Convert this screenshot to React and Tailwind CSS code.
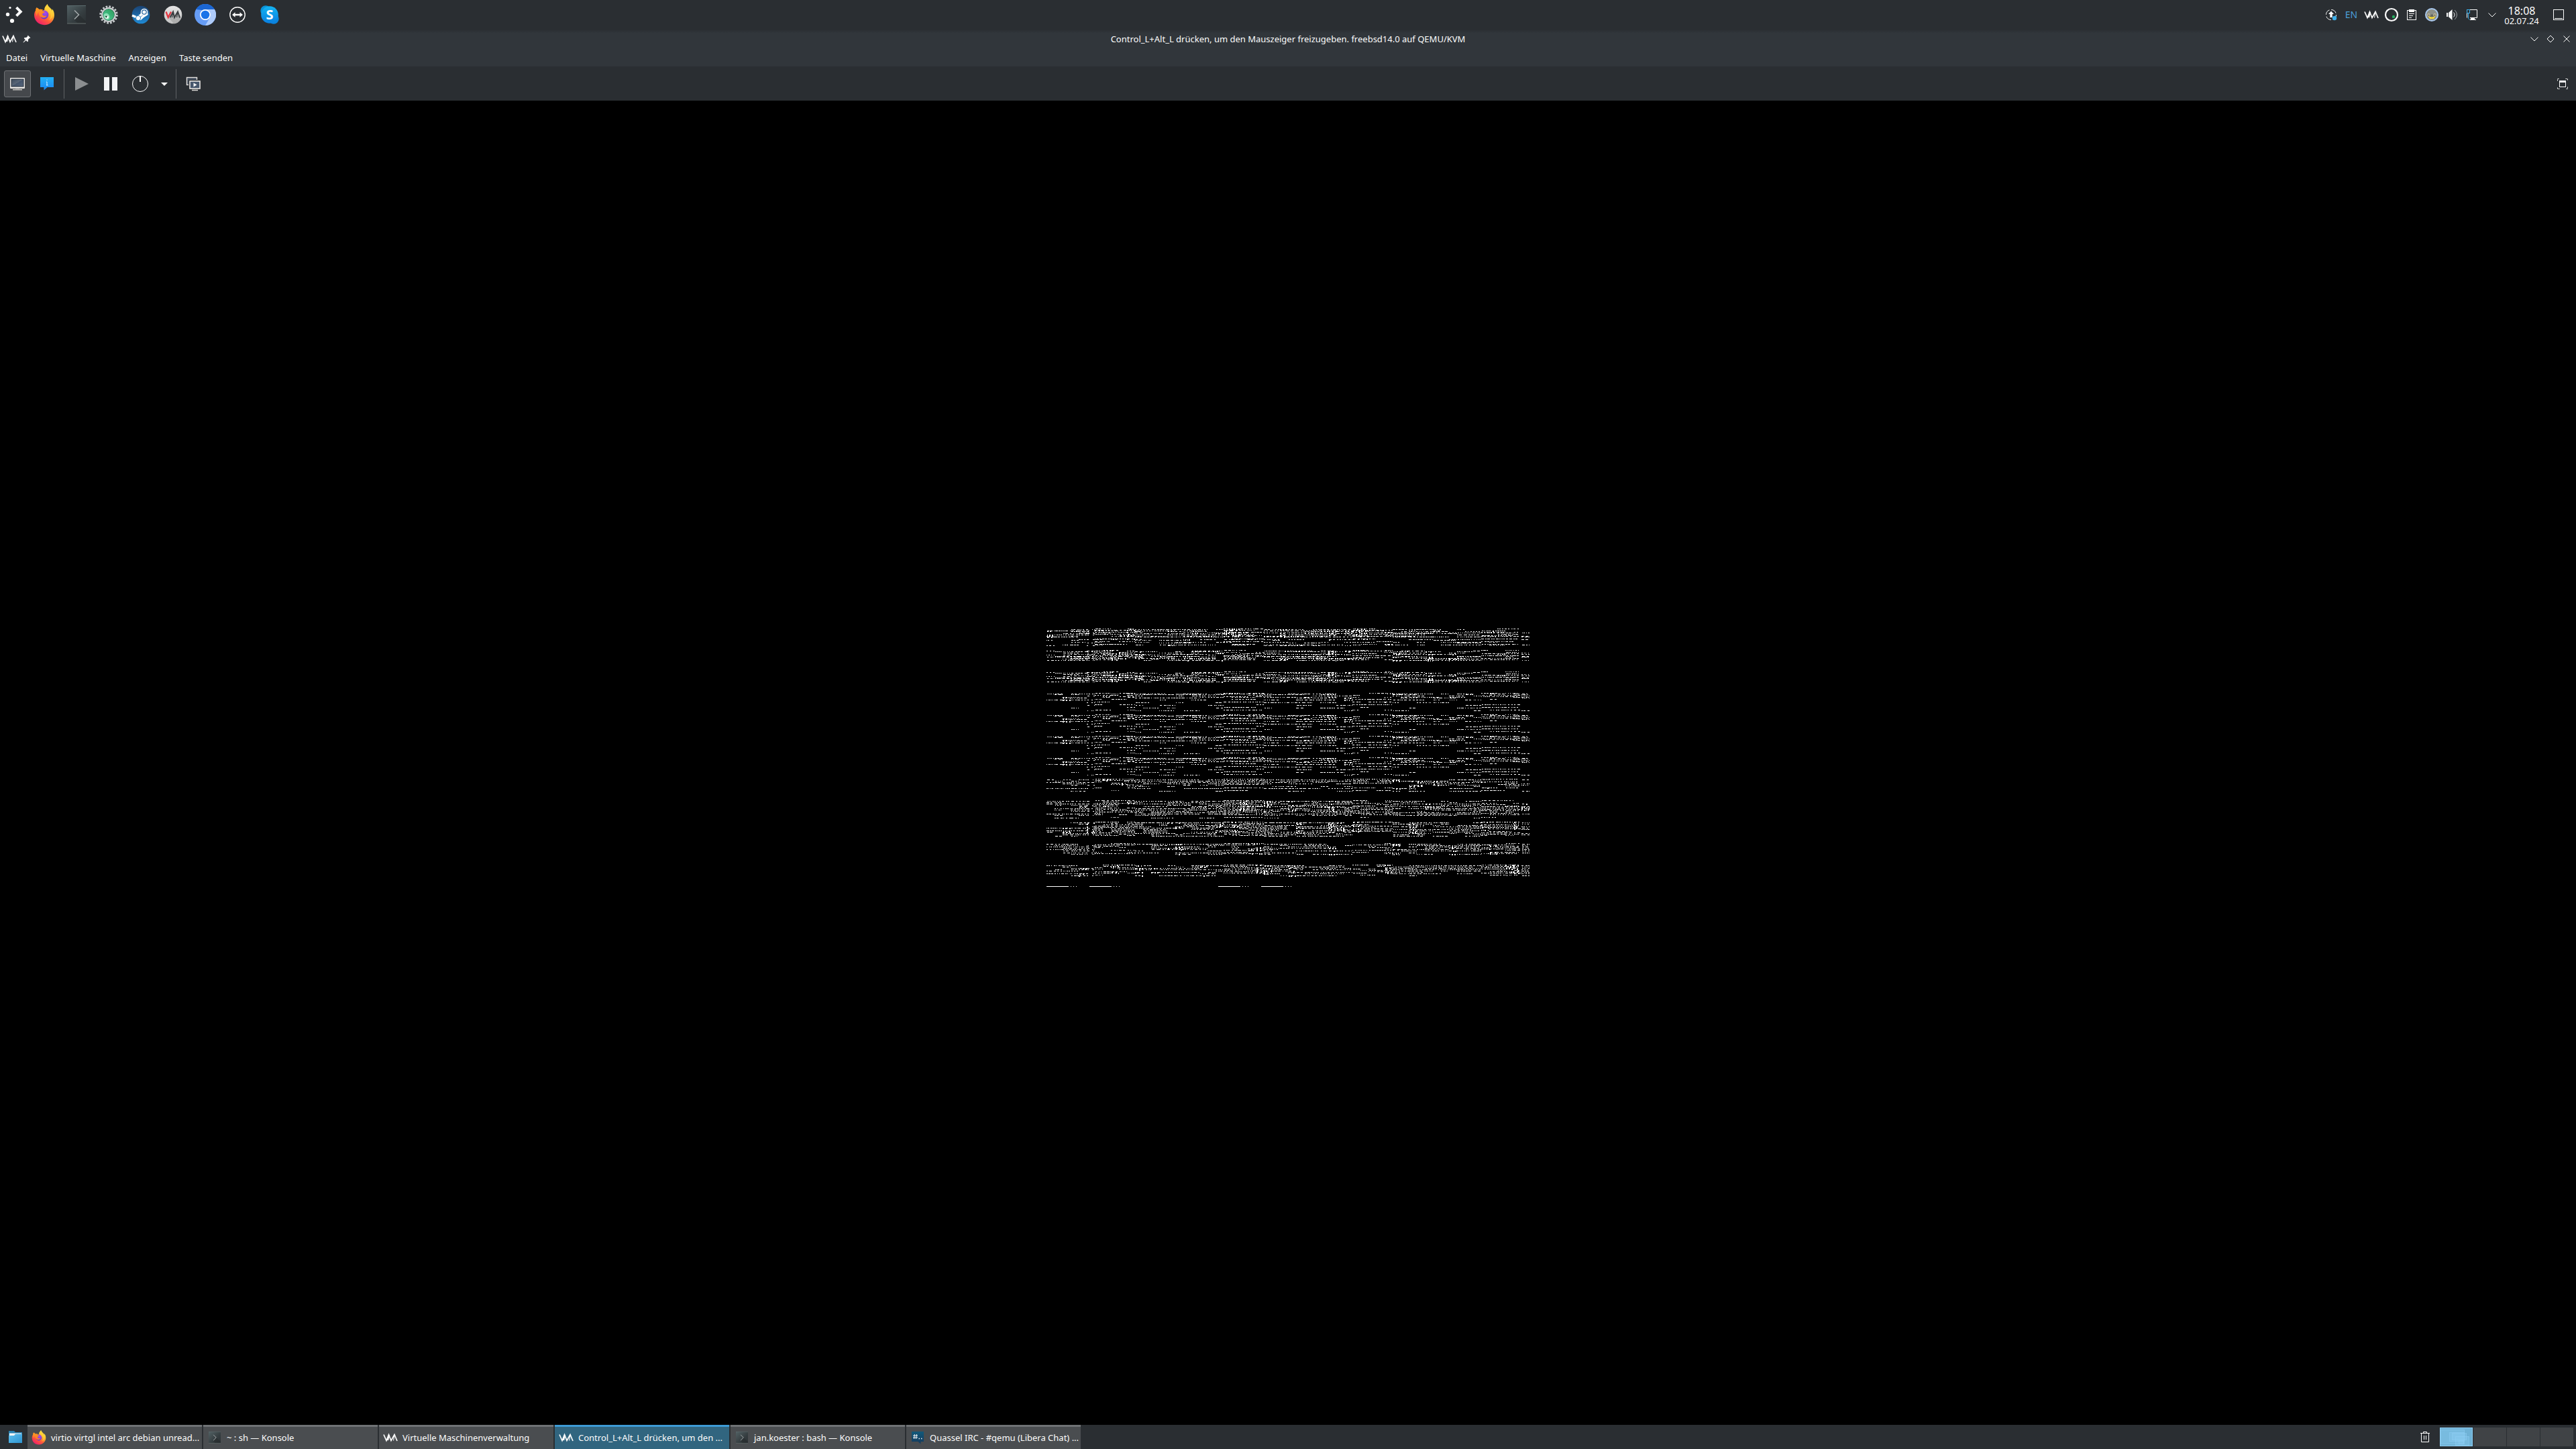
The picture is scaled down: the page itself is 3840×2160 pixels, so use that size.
import React from "react";

/* ---------- guest display: garbled text-mode framebuffer ---------- */

const SPARSE = [[0, 0.6], [1, 0.5], [3, 0.62], [5, 0.5], [6, 0.35], [9, 0.5], [13, 0.5], [17, 0.45], [21, 0.45], [25, 0.5]];
const MEDIUM = [[0, 0.55], [1, 0.4], [3, 0.5], [5, 0.75], [6, 0.4], [8, 0.75], [9, 0.6], [11, 0.6], [12, 0.4], [14, 0.75]];
const BANDS = [
  { y: 0, seed: 11, rows: [[0, 0.65], [2, 0.7], [3, 0.5], [5, 0.75], [6, 0.5], [8, 0.75], [10, 0.65], [11, 0.7], [15, 0.65], [16, 0.35], [19, 0.5], [20, 0.25], [23, 0.55], [24, 0.25]] },
  { y: 32, seed: 23, rows: MEDIUM },
  { y: 64, seed: 23, rows: MEDIUM },
  { y: 96, seed: 37, rows: SPARSE },
  { y: 128, seed: 37, rows: SPARSE },
  { y: 160, seed: 37, rows: SPARSE },
  { y: 192, seed: 37, rows: SPARSE },
  { y: 224, seed: 53, rows: [[0, 0.7], [2, 0.6], [4, 0.7], [6, 0.6], [8, 0.65], [10, 0.4], [13, 0.6], [17, 0.5]] },
  { y: 256, seed: 67, rows: [[0, 0.8], [2, 0.5], [4, 0.6], [6, 0.75], [8, 0.8], [9, 0.5], [11, 0.8], [13, 0.7], [15, 0.5], [17, 0.7], [19, 0.7], [21, 0.5], [25, 0.55]] },
  { y: 288, seed: 71, rows: [[0, 0.8], [2, 0.5], [4, 0.7], [6, 0.7], [8, 0.8], [10, 0.75], [12, 0.65], [14, 0.7], [16, 0.75], [18, 0.5], [20, 0.5]] },
  { y: 320, seed: 83, rows: [[0, 0.7], [2, 0.6], [4, 0.7], [6, 0.7], [8, 0.55], [10, 0.75], [13, 0.6], [15, 0.7]] },
  { y: 352, seed: 97, rows: [[0, 0.75], [2, 0.6], [4, 0.7], [6, 0.75], [8, 0.6], [10, 0.6], [12, 0.6], [15, 0.6]] },
];

function randomSource(seed) {
  let s = seed * 7919 + 17;
  return () => {
    s = (s * 1664525 + 1013904223) % 4294967296;
    return s / 4294967296;
  };
}

const CELL = 12;
const CELL_COUNT = 60;

/* Column weights shared by every band, so that dense and thin columns line up. */
const columnNext = randomSource(5);
const COLUMN_WEIGHT = Array.from({ length: CELL_COUNT }, (_, i) => {
  const base = 0.65 + columnNext() * 0.65;
  return i >= 22 && i <= 25 ? base + 0.35 : base;
});

function noisePath() {
  let d = "";
  for (const band of BANDS) {
    const next = randomSource(band.seed);
    const clump = Array.from({ length: CELL_COUNT }, () => next() < 0.13);
    for (const [dy, density] of band.rows) {
      let on = false;
      for (let c = 0; c < CELL_COUNT; c++) {
        const start = c * CELL;
        const end = start + CELL;
        const shift = Math.floor(start / 64) % 3 === 1 ? 0 : 1;
        if (next() < 0.6) on = next() < density * COLUMN_WEIGHT[c];
        const wide = next() < 0.5;
        let x = start + Math.floor(next() * 2);
        while (x < end) {
          const len = Math.min(wide ? 2 + Math.floor(next() * 3) : 1 + Math.floor(next() * 2), end - x);
          const gutter = (x > 63 && x < 67) || (x > 703 && x < 708);
          if (on && !gutter) {
            d += `M${x} ${band.y + dy + shift}h${len}v1h-${len}z`;
            if (clump[c] && dy < 16 && next() < 0.6) d += `M${x} ${band.y + dy + shift + 1}h${Math.min(len, 2)}v1h-${Math.min(len, 2)}z`;
          }
          x += len + 1 + Math.floor(next() * 2.6);
        }
      }
    }
  }
  for (const x of [0, 64, 256, 320]) {
    d += `M${x} 384h33v1h-33zM${x + 36} 384h1v1h-1zM${x + 40} 384h1v1h-1zM${x + 44} 384h1v1h-1z`;
  }
  return d;
}

const NOISE = noisePath();

/* ---------- icons ---------- */

const Svg = ({ s = 32, children, ...rest }) => (
  <svg width={s} height={s} viewBox={`0 0 ${s} ${s}`} fill="none" aria-hidden="true" {...rest}>
    {children}
  </svg>
);

const LauncherIcon = () => (
  <Svg>
    <circle cx="10" cy="5.5" r="1.6" fill="#fcfcfc" />
    <circle cx="6.5" cy="15.5" r="2.7" fill="#fcfcfc" />
    <circle cx="13" cy="25" r="3.1" fill="#fcfcfc" />
    <path d="M19.5 5.2l6.2 6.2-6.2 6.2" stroke="#fcfcfc" strokeWidth="4" />
  </Svg>
);

const FirefoxIcon = ({ id, size = 32 }) => (
  <svg width={size} height={size} viewBox="0 0 32 32" aria-hidden="true">
    <defs>
      <linearGradient id={`${id}a`} x1="0.8" y1="0.1" x2="0.25" y2="0.95">
        <stop offset="0" stopColor="#fff04a" />
        <stop offset="0.35" stopColor="#ffb42c" />
        <stop offset="0.65" stopColor="#ff5a3a" />
        <stop offset="1" stopColor="#f0206a" />
      </linearGradient>
      <radialGradient id={`${id}b`} cx="0.6" cy="0.3" r="0.8">
        <stop offset="0" stopColor="#a94bf0" />
        <stop offset="1" stopColor="#5438c8" />
      </radialGradient>
      <linearGradient id={`${id}c`} x1="0.3" y1="0" x2="0.5" y2="1">
        <stop offset="0" stopColor="#ff9a1f" />
        <stop offset="1" stopColor="#ff7a2a" />
      </linearGradient>
    </defs>
    <path fill={`url(#${id}a)`} d="M20.6 0c-1 1.800-4.400 4-4.300 8.500L9 12.500 4.600 5.200C3.400 6.500 3.200 8 3.300 9.500 1.700 11.500 1 14 1 16.600 1 25 7.800 31.200 16 31.200S31 25 31 16.400c0-4-1.500-7.300-3.200-9.200.3 1.200.3 2.300.2 3C26.600 6.300 21.600 4.500 20.600 0z" />
    <circle cx="16" cy="16" r="6.400" fill={`url(#${id}b)`} />
    <path fill={`url(#${id}c)`} d="M4.600 5.200c1.300.3 2.800 1.500 3.700 2.700 2-.5 4.200-.3 6 .8-1.200.8-1.300 1.700-.2 2.100 1 .3 2.600.1 2.600 1-.2 1.300-2.500 1.600-3.300 2.400-.8 1 .2 3.300 2.600 3.500 1.400.1 2.600-.6 3.800-.2-1.300 2.300-3.800 3.400-6.300 2.800C9 19.200 7 15 8.300 11.400 5.800 13 4.900 15.500 5 18 2.800 14.500 2.600 9 4.600 5.200z" />
    <path fill="#ffcf3a" d="M20.600 0c-1 1.800-3.600 3.800-4.300 7.200 4 .6 6.800 3.600 7 7.400.8-.8 1.100-1.800 1-2.800 2.400 3.600 1.800 9-1.600 12.200C28 22 30 16 28 10.200 26.600 6.300 21.600 4.500 20.600 0z" opacity="0.75" />
  </svg>
);

const KonsoleIcon = ({ id, size = 28 }) => (
  <svg width={size} height={size} viewBox="0 0 28 28" aria-hidden="true" fill="none">
    <defs>
      <linearGradient id={id} x1="0" y1="0" x2="1" y2="1">
        <stop offset="0" stopColor="#536265" />
        <stop offset="0.6" stopColor="#353d40" />
        <stop offset="1" stopColor="#2a3033" />
      </linearGradient>
    </defs>
    <rect width="28" height="27" fill={`url(#${id})`} />
    <path d="M18 14l10 10v3H16l-5-5z" fill="#23282a" opacity="0.5" />
    <path d="M0 .5h28" stroke="#5c6c6f" />
    <path d="M0 27h28" stroke="#67706f" />
    <path d="M11 7.500l6.500 6.500-6.500 6.500" stroke="#a4aaab" strokeWidth="1.500" />
  </svg>
);

const GearIcon = () => (
  <Svg>
    <defs>
      <linearGradient id="gearGreen" x1="1" y1="0" x2="0" y2="1">
        <stop offset="0" stopColor="#2c9a5a" />
        <stop offset="1" stopColor="#4ed09a" />
      </linearGradient>
    </defs>
    <circle cx="16" cy="16" r="12.300" stroke="#c9cdcf" strokeWidth="2.800" strokeDasharray="2.700 2.130" />
    <circle cx="16" cy="16" r="10.500" fill="#c9cdcf" stroke="#d8dbdd" />
    <circle cx="16" cy="16" r="8.700" fill="#1d5a40" />
    <circle cx="16" cy="16" r="8.200" fill="url(#gearGreen)" />
    <ellipse cx="13" cy="18.500" rx="4.200" ry="5" fill="#8fe0b8" transform="rotate(-30 13 18.500)" />
    <circle cx="13.500" cy="19.500" r="2.300" fill="#f4fff8" />
    <path d="M10.500 18l3.500-.5-1.200 3.200z" fill="#17402e" />
  </Svg>
);

const SteamIcon = () => (
  <Svg>
    <defs>
      <linearGradient id="steamBg" x1="0" y1="0" x2="0" y2="1">
        <stop offset="0" stopColor="#1b4373" />
        <stop offset="1" stopColor="#1f8bd6" />
      </linearGradient>
    </defs>
    <circle cx="16" cy="16" r="13.300" fill="url(#steamBg)" />
    <path d="M3 17l7.500 3.300 6-4.300 2.500-5.500 6 4.500-5.500 3.500-5 4.500" stroke="#fff" strokeWidth="3.400" strokeLinejoin="round" />
    <circle cx="21" cy="12" r="5.300" fill="#fff" />
    <circle cx="21" cy="12" r="3.200" fill="#fff" stroke="#1d5d98" strokeWidth="1.200" />
    <circle cx="12" cy="21" r="3.600" fill="#fff" stroke="#1d77b8" strokeWidth="0.900" />
  </Svg>
);

const VirtManagerIcon = () => (
  <Svg>
    <defs>
      <linearGradient id="vmBg" x1="0" y1="0" x2="0" y2="1">
        <stop offset="0" stopColor="#e4e4e4" />
        <stop offset="1" stopColor="#c4c4c4" />
      </linearGradient>
    </defs>
    <circle cx="16" cy="16" r="13.300" fill="url(#vmBg)" />
    <path d="M9 20l8 9c5-.5 9-3.500 11-8l-2-5z" fill="#8d8d8d" opacity="0.45" />
    <path d="M11.500 20l4.500-8.500 2 8.500 5-8.500 3 9" stroke="#3a3d40" strokeWidth="2" />
    <path d="M16 12l-1.500 8M23 12l-1.500 8" stroke="#3a3d40" strokeWidth="1.300" />
    <path d="M5.500 11.500l3.200 8.500 4.300-8.500" stroke="#e3343f" strokeWidth="2.200" />
  </Svg>
);

const ChromiumIcon = () => (
  <Svg>
    <circle cx="16" cy="16" r="16" fill="#669df6" />
    <path d="M2.140 8A16 16 0 0 1 29.860 8H16a8 8 0 0 0-6.900 4z" fill="#1b66d2" />
    <path d="M2.140 8L9.100 20 11 9z" fill="#669df6" />
    <path d="M29.860 8A16 16 0 0 1 16 32l6.930-12A8 8 0 0 0 16 8z" fill="#aecbfa" />
    <circle cx="16" cy="16" r="8" fill="#fff" />
    <circle cx="16" cy="16" r="6.300" fill="#1a73e8" />
  </Svg>
);

const TeamViewerIcon = () => (
  <Svg>
    <circle cx="16" cy="16" r="11.200" stroke="#fcfcfc" strokeWidth="1.400" />
    <path d="M8 16l4.500-3.800v2.600h7v-2.600L24 16l-4.500 3.800v-2.600h-7v2.600z" fill="#fcfcfc" />
  </Svg>
);

const SkypeIcon = () => (
  <Svg>
    <defs>
      <linearGradient id="skypeBg" x1="0" y1="0" x2="0" y2="1">
        <stop offset="0" stopColor="#14b4f2" />
        <stop offset="1" stopColor="#0a7fe0" />
      </linearGradient>
    </defs>
    <circle cx="10" cy="10" r="7.700" fill="#0a93d8" />
    <circle cx="22" cy="22" r="7.700" fill="#0b84dd" />
    <circle cx="16" cy="16" r="12.800" fill="url(#skypeBg)" />
    <text x="16" y="23" textAnchor="middle" fill="#fff" fontSize="20" fontWeight="700" fontFamily="'Noto Sans', sans-serif">S</text>
  </Svg>
);

const VmMark = () => (
  <Svg s={24}>
    <path d="M2 7.500l4 9L9.500 7.500 13 16.500l5-9 4 9.500" stroke="#fcfcfc" strokeWidth="1.700" />
    <path d="M9.500 8L7.500 16M18 8l-1.500 8.500M10.500 8l-2 8" stroke="#fcfcfc" strokeWidth="1.100" />
  </Svg>
);

const PinIcon = () => (
  <svg width="12" height="12" viewBox="0 0 12 12" aria-hidden="true">
    <path d="M7.500.5l4 4-1.700.4-1.900 2 .2 2.600-1.300.7-2-2L1 11.500.5 11l3.300-3.800-2-2L2.500 4l2.600.1 2-1.900z" fill="#fcfcfc" />
  </svg>
);

const UpdateIcon = () => (
  <Svg s={24}>
    <circle cx="12" cy="12" r="7.500" stroke="#fcfcfc" strokeDasharray="9 2.780" />
    <path d="M12 6.500l4 4.500h-2.300v5h-3.400v-5H8z" fill="#fcfcfc" />
    <circle cx="17" cy="17" r="3.200" fill="#3daee9" />
  </Svg>
);

const RingIcon = () => (
  <Svg s={24}>
    <circle cx="12" cy="12" r="9" stroke="#fcfcfc" strokeWidth="2.200" />
    <circle cx="15" cy="15" r="2.200" fill="#27ae60" />
  </Svg>
);

const ClipboardIcon = () => (
  <Svg s={24}>
    <rect x="5.500" y="5.500" width="13" height="14" stroke="#fcfcfc" />
    <rect x="8" y="4" width="8" height="4" fill="#fcfcfc" />
    <path d="M8 10.500h8M8 13.500h6M8 16.500h4" stroke="#fcfcfc" />
  </Svg>
);

const BirdIcon = () => (
  <Svg s={24}>
    <circle cx="12" cy="12" r="9" fill="#8d9088" stroke="#a9c8ee" strokeWidth="2" />
    <path d="M5 12.500c2-1.500 12-1.500 14 0l-2 3.500c-3 2-7 2-10 0z" fill="#666a64" />
    <path d="M6.500 14.500l5.500 1 5.500-1-2.500 3.500H9z" fill="#f3d93a" />
    <circle cx="7.500" cy="12.500" r="1.800" stroke="#e6d4a4" />
    <circle cx="16.500" cy="12.500" r="1.800" stroke="#e6d4a4" />
  </Svg>
);

const VolumeIcon = () => (
  <Svg s={24}>
    <path d="M4 9h2v6H4zM7 9l5.500-5v16L7 15z" fill="#fcfcfc" />
    <path d="M14.500 8.500c2 2 2 5 0 7" stroke="#fcfcfc" />
    <path d="M16 5c4.500 4 4.500 10 0 14" stroke="#a5a8aa" />
  </Svg>
);

const NetworkIcon = () => (
  <Svg s={24}>
    <path d="M9 4.500h10.500v12H9M4.500 10v6.500" stroke="#fcfcfc" />
    <path d="M10 16h6v3h2v1H9v-1h1z" fill="#fcfcfc" />
    <rect x="4.500" y="4.500" width="4" height="5" stroke="#3daee9" />
    <path d="M6.500 10v7.500l2 2" stroke="#3daee9" />
  </Svg>
);

const ChevronDown = () => (
  <Svg s={24}>
    <path d="M6.500 9.500l5.500 5.500 5.500-5.500" stroke="#fcfcfc" />
  </Svg>
);

const ShowDesktopIcon = () => (
  <Svg s={24}>
    <rect x="4.500" y="4.500" width="15" height="15" stroke="#fcfcfc" />
    <path d="M6 17.500h12" stroke="#fcfcfc" />
  </Svg>
);

const DiamondIcon = () => (
  <Svg s={24}>
    <path d="M12 7l5 5-5 5-5-5z" stroke="#fcfcfc" />
  </Svg>
);

const CloseIcon = () => (
  <Svg s={24}>
    <path d="M7.500 7.500l9 9M16.500 7.500l-9 9" stroke="#fcfcfc" />
  </Svg>
);

const ConsoleIcon = () => (
  <Svg s={24}>
    <defs>
      <linearGradient id="screen" x1="0" y1="0" x2="1" y2="1">
        <stop offset="0" stopColor="#3c4a5c" />
        <stop offset="0.5" stopColor="#5a6778" />
        <stop offset="0.5" stopColor="#44536a" />
        <stop offset="1" stopColor="#58687e" />
      </linearGradient>
    </defs>
    <rect x="1" y="3" width="22" height="16" rx="1" fill="#e9e7e4" />
    <rect x="3" y="5" width="18" height="11" fill="url(#screen)" stroke="#26303c" />
    <path d="M9 19h6v1H9z" fill="#6c6e70" />
    <path d="M5 20h14v1.500H5z" fill="#c9c7c4" />
  </Svg>
);

const InfoIcon = () => (
  <Svg s={24}>
    <defs>
      <linearGradient id="info" x1="0" y1="0" x2="0" y2="1">
        <stop offset="0" stopColor="#23b0f4" />
        <stop offset="1" stopColor="#1b86f0" />
      </linearGradient>
    </defs>
    <path d="M2 2h20v15h-9.500L7.500 21.500V17H2z" fill="url(#info)" />
    <path d="M12 5.500v1.200M11 9h1v5m-1 0h2.500" stroke="#d8efff" />
  </Svg>
);

const PlayIcon = () => (
  <Svg s={24}>
    <path d="M3 2l20 10L3 22z" fill="#8b8e90" />
  </Svg>
);

const PauseIcon = () => (
  <Svg s={24}>
    <path d="M2 2h8v20H2zM14 2h8v20h-8z" fill="#f2f3f5" />
  </Svg>
);

const PowerIcon = () => (
  <Svg s={26}>
    <circle cx="13" cy="13" r="11.500" stroke="#fcfcfc" />
    <path d="M13 1v9" stroke="#fcfcfc" strokeWidth="2" />
  </Svg>
);

const CaretIcon = () => (
  <Svg s={24}>
    <path d="M7 10h10l-5 5z" fill="#fcfcfc" />
  </Svg>
);

const ScreensIcon = () => (
  <Svg s={24}>
    <rect x="2.500" y="2.500" width="15" height="11" fill="#46515f" stroke="#e4e2df" strokeWidth="1.400" />
    <path d="M6 17h5" stroke="#c9c7c4" strokeWidth="2" />
    <rect x="6.500" y="7.500" width="16" height="12" fill="#46566c" stroke="#2a2e32" strokeWidth="3" />
    <rect x="7" y="8" width="15" height="11" fill="#46566c" stroke="#e9e7e4" strokeWidth="1.600" />
    <path d="M12.500 10.500l5 3-5 3z" fill="#f2f3f5" />
    <path d="M10 21.500h9" stroke="#dcdad7" strokeWidth="1.500" />
  </Svg>
);

const FullscreenIcon = () => (
  <Svg s={24}>
    <path d="M4.500 7.500v-3h3M16.500 4.500h3v3M19.500 16.500v3h-3M7.500 19.500h-3v-3" stroke="#fcfcfc" strokeDasharray="2 1 2 1" />
    <rect x="7.500" y="8" width="9" height="8.500" stroke="#fcfcfc" />
    <path d="M7 7h10v3H7z" fill="#fcfcfc" />
  </Svg>
);

const FolderIcon = () => (
  <Svg s={24}>
    <defs>
      <linearGradient id="folder" x1="0" y1="0" x2="1" y2="1">
        <stop offset="0" stopColor="#5cc0f0" />
        <stop offset="1" stopColor="#2f93cf" />
      </linearGradient>
    </defs>
    <path d="M2 3h8l2 2h10v9H2z" fill="#2980b0" />
    <path d="M3 6.500h18V12H3z" fill="#f4f6f7" />
    <path d="M2 10h8l2-2.500h10V21H2z" fill="url(#folder)" />
  </Svg>
);

const QuasselIcon = () => (
  <Svg s={20}>
    <defs>
      <linearGradient id="quassel" x1="0" y1="0" x2="0" y2="1">
        <stop offset="0" stopColor="#12597a" />
        <stop offset="1" stopColor="#153a5c" />
      </linearGradient>
    </defs>
    <path d="M1 1h18v15h-4.500v3.500L10.500 16H1z" fill="url(#quassel)" />
    <path d="M5.500 5L4.500 12M8.500 5l-1 7M3 7h7M3 10h7" stroke="#f2f3f5" />
    <path d="M11.500 11.500h1.500M15 11.500h1.500" stroke="#f2f3f5" strokeWidth="1.500" />
  </Svg>
);

const TrashIcon = () => (
  <Svg s={24}>
    <path d="M6.500 6.500v13h11v-13M5 6.500h14M9.500 6V4.500h5V6M10.500 10v6M13.500 10v6" stroke="#fcfcfc" />
  </Svg>
);

/* ---------- data ---------- */

const LAUNCHERS = [
  ["Firefox", <FirefoxIcon id="ff1" />],
  ["Konsole", <KonsoleIcon id="ko1" />],
  ["Einstellungen", <GearIcon />],
  ["Steam", <SteamIcon />],
  ["Virtuelle Maschinenverwaltung", <VirtManagerIcon />],
  ["Chromium", <ChromiumIcon />],
  ["TeamViewer", <TeamViewerIcon />],
  ["Skype", <SkypeIcon />],
];

const TRAY = [
  ["Aktualisierungen", <UpdateIcon />],
  ["Tastaturbelegung", <span className="text-[14px] leading-5 text-[#4a9fd8]">EN</span>],
  ["Virtuelle Maschinen", <VmMark />],
  ["Status", <RingIcon />],
  ["Zwischenablage", <ClipboardIcon />],
  ["Benachrichtigungen", <BirdIcon />],
  ["Lautstärke", <VolumeIcon />],
  ["Netzwerk", <NetworkIcon />],
  ["Weitere Symbole", <ChevronDown />],
];

const MENUS = ["Datei", "Virtuelle Maschine", "Anzeigen", "Taste senden"];

const TASKS = [
  { icon: <FirefoxIcon id="ff2" size={22} />, label: "virtio virtgl intel arc debian unread..." },
  { icon: <KonsoleIcon id="ko2" size={18} />, label: "~ : sh — Konsole" },
  { icon: <VmMark />, label: "Virtuelle Maschinenverwaltung" },
  { icon: <VmMark />, label: "Control_L+Alt_L drücken, um den ...", active: true },
  { icon: <KonsoleIcon id="ko3" size={18} />, label: "jan.koester : bash — Konsole" },
  { icon: <QuasselIcon />, label: "Quassel IRC - #qemu (Libera Chat) ..." },
];

/* ---------- parts ---------- */

const ToolButton = ({ label, children, className = "w-10" }) => (
  <button aria-label={label} className={`flex h-10 items-center justify-center rounded-[3px] ${className}`}>
    {children}
  </button>
);

const Separator = () => <div className="mx-px h-11 w-px bg-[#5f6265]" />;

function TopPanel() {
  return (
    <header className="flex h-11 items-center bg-[#2a2e32]">
      <button aria-label="Anwendungsmenü" className="flex h-11 w-[42px] items-center justify-center">
        <LauncherIcon />
      </button>
      {LAUNCHERS.map(([name, icon]) => (
        <button key={name} aria-label={name} className="flex h-11 w-12 items-center justify-center">
          {icon}
        </button>
      ))}
      <div className="ml-auto flex items-center">
        {TRAY.map(([name, icon]) => (
          <button key={name} aria-label={name} className="flex h-11 w-[30px] items-center justify-center">
            {icon}
          </button>
        ))}
        <button className="flex h-11 w-[58px] flex-col items-center justify-center pt-0.5">
          <span className="text-[16px] leading-4">18:08</span>
          <span className="text-[13px] leading-[14px]">02.07.24</span>
        </button>
        <button aria-label="Arbeitsfläche anzeigen" className="flex h-11 w-[52px] items-center justify-center">
          <ShowDesktopIcon />
        </button>
      </div>
    </header>
  );
}

function TitleBar() {
  return (
    <div className="grid h-7 grid-cols-[1fr_auto_1fr] items-center bg-linear-to-b from-[#2a2e32] from-0% to-[#31363b] to-20%">
      <div className="flex items-center gap-1.5 pl-0.5">
        <VmMark />
        <button aria-label="Anheften" className="p-0.5"><PinIcon /></button>
      </div>
      <h1 className="text-[13px] leading-5">Control_L+Alt_L drücken, um den Mauszeiger freizugeben. freebsd14.0 auf QEMU/KVM</h1>
      <div className="flex justify-end pr-0.5">
        <button aria-label="Minimieren"><ChevronDown /></button>
        <button aria-label="Wiederherstellen"><DiamondIcon /></button>
        <button aria-label="Schließen"><CloseIcon /></button>
      </div>
    </div>
  );
}

function MenuBar() {
  return (
    <nav className="flex h-[27px] items-center bg-[#31363b]">
      {MENUS.map((m) => (
        <button key={m} className="pl-[9px] pr-2.5 text-[13px] leading-5">{m}</button>
      ))}
    </nav>
  );
}

function ToolBar() {
  return (
    <div className="flex h-[51px] items-center gap-1 bg-[#2a2e32] px-1.5">
      <ToolButton label="Konsole" className="w-10 border border-[#6e7174] bg-[#45484c]"><ConsoleIcon /></ToolButton>
      <ToolButton label="Details"><InfoIcon /></ToolButton>
      <Separator />
      <ToolButton label="Starten"><PlayIcon /></ToolButton>
      <ToolButton label="Pause"><PauseIcon /></ToolButton>
      <ToolButton label="Herunterfahren"><PowerIcon /></ToolButton>
      <ToolButton label="Weitere Optionen" className="w-6"><CaretIcon /></ToolButton>
      <Separator />
      <ToolButton label="Schnappschüsse"><ScreensIcon /></ToolButton>
      <div className="ml-auto flex">
        <ToolButton label="Vollbild" className="w-7"><FullscreenIcon /></ToolButton>
      </div>
    </div>
  );
}

function TaskBar() {
  return (
    <footer className="flex h-9 items-stretch bg-[#2a2e32]">
      <button aria-label="Dateien" className="flex w-[41px] items-center justify-center pl-1"><FolderIcon /></button>
      <div className="flex gap-0.5">
        {TASKS.map((t) => (
          <button
            key={t.label}
            className={`flex w-[260px] items-center gap-1.5 border-t-[3px] pb-0.5 pl-[5px] text-left ${t.active ? "border-[#3d9bd6] bg-[#31657f]" : "border-[#6f7275] bg-[#4a4d50]"}`}
          >
            <span className="flex w-6 shrink-0 items-center justify-center">{t.icon}</span>
            <span className="whitespace-nowrap text-[13px] leading-5">{t.label}</span>
          </button>
        ))}
      </div>
      <div className="ml-auto flex items-center pr-1">
        <button aria-label="Papierkorb" className="mr-2.5"><TrashIcon /></button>
        <div className="flex gap-px">
          <button aria-label="Arbeitsfläche 1" className="h-7 w-[49px] border border-[#8fd0f5] bg-[#6fb2d6]">
            <svg className="h-full w-full" viewBox="0 0 47 26" aria-hidden="true">
              <g fill="#8accf0" fillOpacity="0.35" stroke="#8fd0f5" strokeOpacity="0.5">
                <rect x="0.500" y="2.500" width="35" height="21" />
                <rect x="13.500" y="6.500" width="22" height="13" />
                <rect x="17.500" y="7.500" width="21" height="10" />
                <rect x="22.500" y="12.500" width="20" height="13" />
                <rect x="27.500" y="18.500" width="7" height="5" />
              </g>
            </svg>
          </button>
          <button aria-label="Arbeitsfläche 2" className="h-7 w-[49px] bg-[#404346]" />
          <button aria-label="Arbeitsfläche 3" className="h-7 w-[49px] bg-[#404346]" />
          <button aria-label="Arbeitsfläche 4" className="h-7 w-[49px] bg-[#404346]" />
        </div>
      </div>
    </footer>
  );
}

export default function App() {
  return (
    <div className="flex h-screen flex-col overflow-hidden bg-black font-['Noto_Sans',sans-serif] text-[#fcfcfc]">
      <TopPanel />
      <TitleBar />
      <MenuBar />
      <ToolBar />
      <main className="flex flex-1 items-center justify-center bg-black">
        <svg width="720" height="400" viewBox="0 0 720 400" shapeRendering="crispEdges" role="img" aria-label="Gastbildschirm">
          <path d={NOISE} fill="#fff" />
        </svg>
      </main>
      <TaskBar />
    </div>
  );
}
